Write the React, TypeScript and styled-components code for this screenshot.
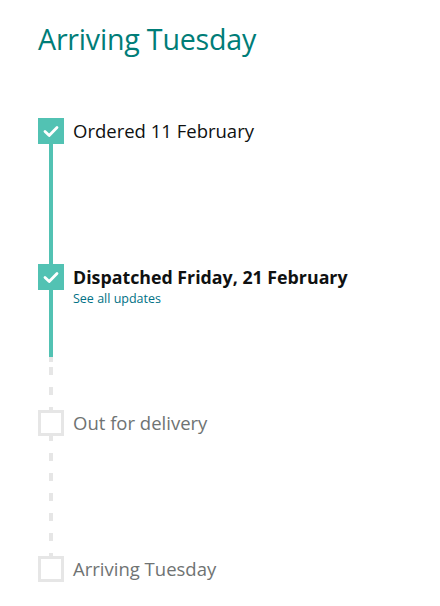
import React from "react";
import styled, { createGlobalStyle } from "styled-components";

type StepState = "done" | "pending";

interface Step {
  label: string;
  state: StepState;
  bold?: boolean;
  link?: string;
  connector?: "solid" | "split" | "dashed";
}

const steps: Step[] = [
  { label: "Ordered 11 February", state: "done", connector: "solid" },
  {
    label: "Dispatched Friday, 21 February",
    state: "done",
    bold: true,
    link: "See all updates",
    connector: "split",
  },
  { label: "Out for delivery", state: "pending", connector: "dashed" },
  { label: "Arriving Tuesday", state: "pending" },
];

const GlobalStyle = createGlobalStyle`
  html, body {
    margin: 0;
    padding: 0;
    background: #ffffff;
  }
  body {
    font-family: "Open Sans", "Noto Sans", Arial, sans-serif;
    color: #0f1111;
  }
`;

const Page = styled.main`
  padding: 19px 38px 0;
`;

const Title = styled.h1`
  margin: 0 0 59px;
  font-size: 28.6px;
  font-weight: 400;
  line-height: 40px;
  letter-spacing: -0.2px;
  color: #007d78;
`;

const Tracker = styled.ol`
  list-style: none;
  margin: 0;
  padding: 0;
`;

const Row = styled.li`
  display: grid;
  grid-template-columns: 26px 1fr;
  column-gap: 9px;
`;

const Rail = styled.div`
  display: flex;
  flex-direction: column;
  align-items: center;
`;

const Box = styled.div<{ $state: StepState }>`
  box-sizing: border-box;
  width: 26px;
  height: 26px;
  display: flex;
  align-items: center;
  justify-content: center;
  background: ${({ $state }) => ($state === "done" ? "#52c2b3" : "#ffffff")};
  border: ${({ $state }) => ($state === "done" ? "none" : "3px solid #e6e6e6")};
`;

const Solid = styled.div<{ $h: number }>`
  width: 4px;
  height: ${({ $h }) => $h}px;
  background: #52c2b3;
`;

const Dashed = styled.div<{ $h: number; $offset: number }>`
  width: 4px;
  height: ${({ $h }) => $h}px;
  background-image: repeating-linear-gradient(
    to bottom,
    #e6e6e6 0 8px,
    transparent 8px 20px
  );
  background-position: 0 ${({ $offset }) => $offset}px;
`;

const Text = styled.div`
  display: flex;
  flex-direction: column;
`;

const Label = styled.span<{ $state: StepState; $bold?: boolean }>`
  font-size: ${({ $bold }) => ($bold ? "17.8px" : "18.5px")};
  line-height: 26px;
  font-weight: ${({ $bold }) => ($bold ? 700 : 400)};
  color: ${({ $state }) => ($state === "done" ? "#0f1111" : "#6f7373")};
`;

const UpdatesLink = styled.a`
  font-size: 12.5px;
  line-height: 18px;
  color: #007185;
  text-decoration: none;
`;

const Check = () => (
  <svg width="26" height="26" viewBox="0 0 26 26">
    <polyline
      points="7,13.5 11.2,17.5 19,9.5"
      fill="none"
      stroke="#ffffff"
      strokeWidth="2.8"
      strokeLinecap="round"
      strokeLinejoin="round"
    />
  </svg>
);

const Connector = ({ kind }: { kind: Step["connector"] }) => {
  if (kind === "solid") return <Solid $h={120} />;
  if (kind === "split")
    return (
      <>
        <Solid $h={67} />
        <Dashed $h={53} $offset={10} />
      </>
    );
  if (kind === "dashed") return <Dashed $h={120} $offset={-3} />;
  return null;
};

export default function App() {
  return (
    <>
      <GlobalStyle />
      <Page>
        <Title>Arriving Tuesday</Title>
        <Tracker>
          {steps.map((step) => (
            <Row key={step.label}>
              <Rail>
                <Box $state={step.state}>{step.state === "done" && <Check />}</Box>
                <Connector kind={step.connector} />
              </Rail>
              <Text>
                <Label $state={step.state} $bold={step.bold}>
                  {step.label}
                </Label>
                {step.link && <UpdatesLink href="#">{step.link}</UpdatesLink>}
              </Text>
            </Row>
          ))}
        </Tracker>
      </Page>
    </>
  );
}
